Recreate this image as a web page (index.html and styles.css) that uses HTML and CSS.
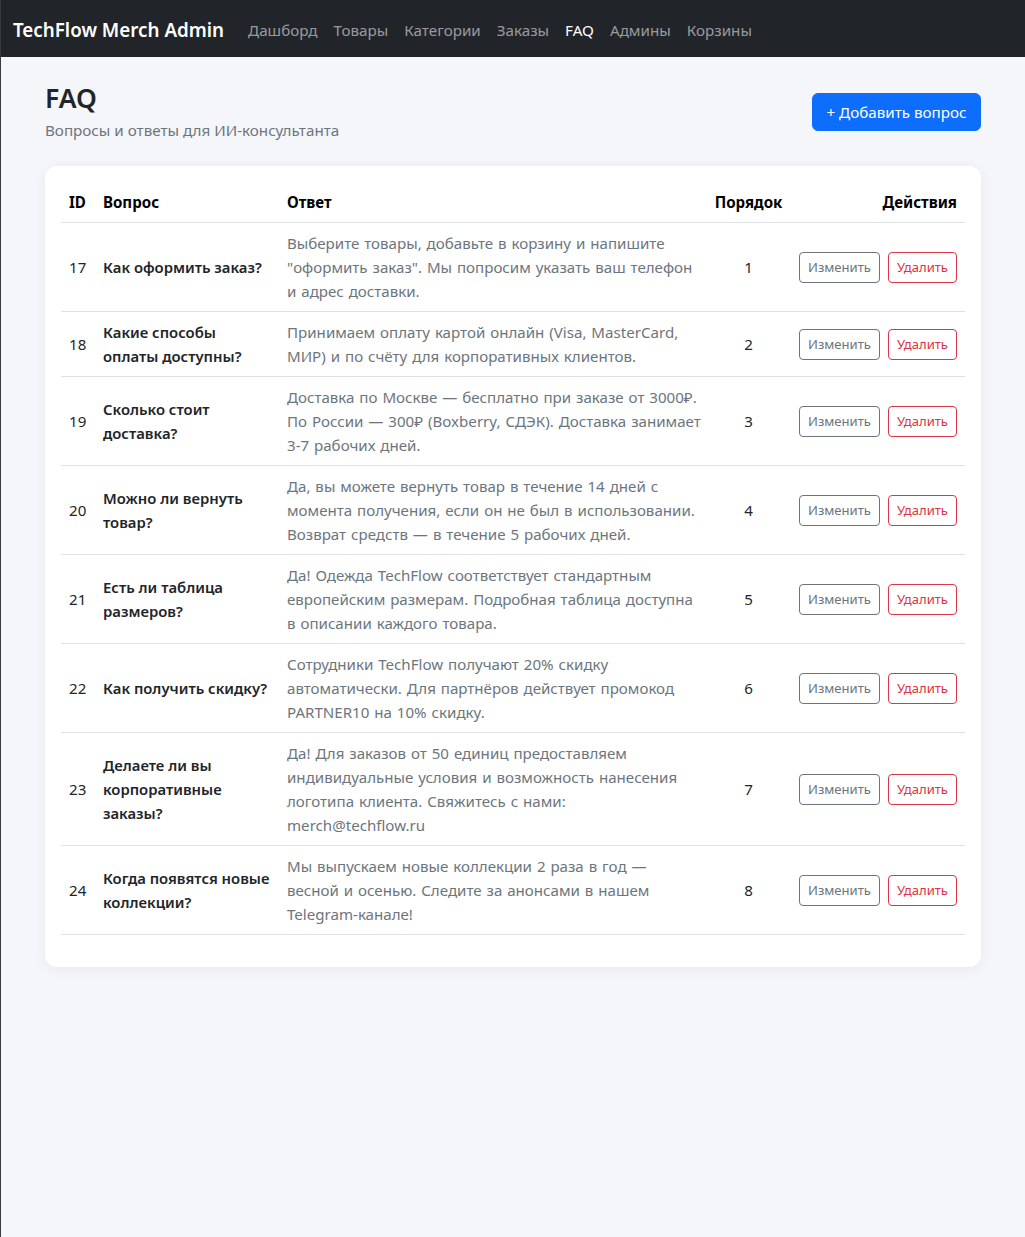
FILE: index.html
```html
<!DOCTYPE html>
<html lang="ru">
<head>
<meta charset="utf-8">
<title>FAQ — TechFlow Merch Admin</title>
<link rel="stylesheet" href="styles.css">
</head>
<body>
<nav class="navbar">
  <a class="brand" href="#">TechFlow Merch Admin</a>
  <ul class="nav">
    <li><a class="nav-link" href="#">Дашборд</a></li>
    <li><a class="nav-link" href="#">Товары</a></li>
    <li><a class="nav-link" href="#">Категории</a></li>
    <li><a class="nav-link" href="#">Заказы</a></li>
    <li><a class="nav-link active" href="#">FAQ</a></li>
    <li><a class="nav-link" href="#">Админы</a></li>
    <li><a class="nav-link" href="#">Корзины</a></li>
  </ul>
</nav>
<main class="container">
  <div class="page-head">
    <div>
      <h1 class="title">FAQ</h1>
      <p class="subtitle">Вопросы и ответы для ИИ-консультанта</p>
    </div>
    <a class="btn btn-primary" href="#">+ Добавить вопрос</a>
  </div>
  <div class="card">
    <table class="table">
      <colgroup>
        <col class="c-id"><col class="c-q"><col class="c-a"><col class="c-o"><col class="c-act">
      </colgroup>
      <thead>
        <tr><th>ID</th><th>Вопрос</th><th>Ответ</th><th class="center">Порядок</th><th class="right">Действия</th></tr>
      </thead>
      <tbody>
        <tr><td>17</td><td class="q">Как оформить заказ?</td><td class="a">Выберите товары, добавьте в корзину и напишите "оформить заказ". Мы попросим указать ваш телефон и адрес доставки.</td><td class="center">1</td><td class="right"><span class="actions"><a class="btn btn-sm btn-outline-secondary" href="#">Изменить</a><a class="btn btn-sm btn-outline-danger" href="#">Удалить</a></span></td></tr>
        <tr><td>18</td><td class="q">Какие способы оплаты доступны?</td><td class="a">Принимаем оплату картой онлайн (Visa, MasterCard, МИР) и по счёту для корпоративных клиентов.</td><td class="center">2</td><td class="right"><span class="actions"><a class="btn btn-sm btn-outline-secondary" href="#">Изменить</a><a class="btn btn-sm btn-outline-danger" href="#">Удалить</a></span></td></tr>
        <tr><td>19</td><td class="q">Сколько стоит доставка?</td><td class="a">Доставка по Москве — бесплатно при заказе от 3000₽. По России — 300₽ (Boxberry, СДЭК). Доставка занимает 3-7 рабочих дней.</td><td class="center">3</td><td class="right"><span class="actions"><a class="btn btn-sm btn-outline-secondary" href="#">Изменить</a><a class="btn btn-sm btn-outline-danger" href="#">Удалить</a></span></td></tr>
        <tr><td>20</td><td class="q">Можно ли вернуть товар?</td><td class="a">Да, вы можете вернуть товар в течение 14 дней с момента получения, если он не был в использовании. Возврат средств — в течение 5 рабочих дней.</td><td class="center">4</td><td class="right"><span class="actions"><a class="btn btn-sm btn-outline-secondary" href="#">Изменить</a><a class="btn btn-sm btn-outline-danger" href="#">Удалить</a></span></td></tr>
        <tr><td>21</td><td class="q">Есть ли таблица размеров?</td><td class="a">Да! Одежда TechFlow соответствует стандартным европейским размерам. Подробная таблица доступна в описании каждого товара.</td><td class="center">5</td><td class="right"><span class="actions"><a class="btn btn-sm btn-outline-secondary" href="#">Изменить</a><a class="btn btn-sm btn-outline-danger" href="#">Удалить</a></span></td></tr>
        <tr><td>22</td><td class="q">Как получить скидку?</td><td class="a">Сотрудники TechFlow получают 20% скидку автоматически. Для партнёров действует промокод PARTNER10 на 10% скидку.</td><td class="center">6</td><td class="right"><span class="actions"><a class="btn btn-sm btn-outline-secondary" href="#">Изменить</a><a class="btn btn-sm btn-outline-danger" href="#">Удалить</a></span></td></tr>
        <tr><td>23</td><td class="q">Делаете ли вы корпоративные заказы?</td><td class="a">Да! Для заказов от 50 единиц предоставляем индивидуальные условия и возможность нанесения логотипа клиента. Свяжитесь с нами: merch@techflow.ru</td><td class="center">7</td><td class="right"><span class="actions"><a class="btn btn-sm btn-outline-secondary" href="#">Изменить</a><a class="btn btn-sm btn-outline-danger" href="#">Удалить</a></span></td></tr>
        <tr><td>24</td><td class="q">Когда появятся новые коллекции?</td><td class="a">Мы выпускаем новые коллекции 2 раза в год — весной и осенью. Следите за анонсами в нашем Telegram-канале!</td><td class="center">8</td><td class="right"><span class="actions"><a class="btn btn-sm btn-outline-secondary" href="#">Изменить</a><a class="btn btn-sm btn-outline-danger" href="#">Удалить</a></span></td></tr>
      </tbody>
    </table>
  </div>
</main>
</body>
</html>
```
FILE: styles.css
```css
* { box-sizing: border-box; }
html { background: #f5f6fa; }
body {
  margin: 0;
  min-height: 1237px;
  border-left: 1px solid #3a3a3a;
  background: #f5f6fa;
  font-family: "Segoe UI", "Noto Sans", "Open Sans", sans-serif;
  font-size: 15.1px;
  line-height: 24px;
  color: #212529;
}
a { text-decoration: none; }

.navbar {
  display: flex;
  align-items: center;
  height: 57px;
  padding: 0 12px;
  background: #212529;
}
.brand {
  color: #fff;
  font-size: 18.8px;
  font-weight: 600;
  line-height: 30px;
  margin-right: 16px;
  margin-top: 2px;
}
.nav {
  display: flex;
  list-style: none;
  margin: 2px 0 0;
  padding: 0;
}
.nav-link {
  display: block;
  padding: 8px;
  font-size: 15.2px;
  color: rgba(255,255,255,.55);
}
.nav-link.active { color: #fff; }

.container {
  width: 960px;
  margin: 0 auto;
  padding: 25px 12px 24px;
}
.page-head {
  display: flex;
  justify-content: space-between;
  align-items: center;
  margin-bottom: 24px;
}
.title {
  margin: 0 0 3px;
  font-size: 26.5px;
  font-weight: 600;
  line-height: 33px;
}
.subtitle {
  margin: 0;
  color: #6c757d;
  font-size: 15.2px;
  line-height: 24px;
}

.btn {
  display: inline-block;
  border: 1px solid transparent;
  border-radius: 6px;
  padding: 6px 12px;
  font-size: 15.2px;
  line-height: 24px;
  text-align: center;
  white-space: nowrap;
}
.btn-primary { background: #0d6efd; border-color: #0d6efd; color: #fff; padding: 6px 13.5px; }
.btn-sm { padding: 4px 8px; font-size: 13.1px; line-height: 21px; border-radius: 4px; }
.btn-outline-secondary { color: #6c757d; border-color: #6c757d; background: #fff; }
.btn-outline-danger { color: #dc3545; border-color: #dc3545; background: #fff; }

.card {
  background: #fff;
  border-radius: 12px;
  padding: 16px;
  box-shadow: 0 2px 14px rgba(0,0,0,.06);
}
.table {
  width: 100%;
  border-collapse: collapse;
  table-layout: fixed;
  margin-bottom: 16px;
}
.c-id { width: 34px; }
.c-q { width: 184px; }
.c-a { width: 427px; }
.c-o { width: 85px; }
.c-act { width: 174px; }
.table th, .table td {
  padding: 8px;
  border-bottom: 1px solid #dee2e6;
  vertical-align: middle;
  text-align: left;
}
.table th { color: #000; font-weight: 700; }
.table td.q { font-weight: 600; font-size: 14.85px; }
.table td.a { color: #6c757d; word-spacing: 1px; padding-right: 4.5px; }
.table .center { text-align: center; }
.table .right { text-align: right; }
.actions { display: inline-flex; gap: 8px; }
```
